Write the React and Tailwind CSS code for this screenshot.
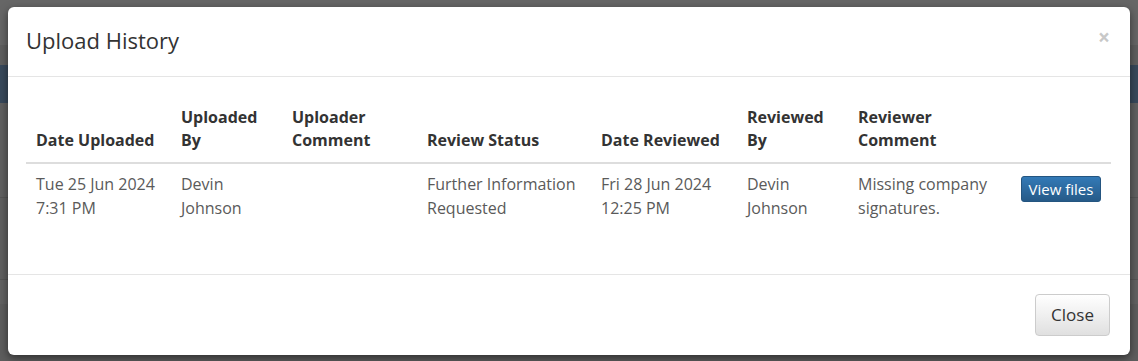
import React from "react";

const cols = [
  { w: "w-[145px]", h: ["Date Uploaded"], b: ["Tue 25 Jun 2024", "7:31 PM"] },
  { w: "w-[111px]", h: ["Uploaded", "By"], b: ["Devin", "Johnson"] },
  { w: "w-[135px]", h: ["Uploader", "Comment"], b: [] },
  { w: "w-[174px]", h: ["Review Status"], b: ["Further Information", "Requested"] },
  { w: "w-[146px]", h: ["Date Reviewed"], b: ["Fri 28 Jun 2024", "12:25 PM"] },
  { w: "w-[111px]", h: ["Reviewed", "By"], b: ["Devin", "Johnson"] },
  { w: "w-[163px]", h: ["Reviewer", "Comment"], b: ["Missing company", "signatures."] },
];

export default function App() {
  return (
    <div
      className="relative h-[361px] w-[1138px] overflow-hidden bg-[#5f5f5f]"
      style={{ fontFamily: '"Open Sans", sans-serif' }}
    >
      {/* background page (dimmed) */}
      <div className="flex h-full flex-col">
        <div className="h-[45px] bg-[#666666]" />
        <div className="h-[20px] bg-[#5e5e5e]" />
        <div className="h-[38px] bg-[#38495b]" />
        <div className="h-[95px] border-b border-[#555] bg-[#606060]" />
        <div className="h-[82px] border-b border-[#555] bg-[#5f5f5f]" />
        <div className="h-[24px] bg-[#626262]" />
        <div className="flex-1 bg-[#5d5d5d]" />
      </div>

      {/* modal */}
      <div className="absolute left-[8px] top-[7px] flex h-[348px] w-[1122px] flex-col rounded-[6px] bg-white shadow-[0_3px_9px_rgba(0,0,0,0.5)]">
        <div className="flex h-[70px] items-center justify-between border-b border-[#e5e5e5] pb-[4px] pl-[18px] pr-[20px]">
          <h4 className="text-[22px] leading-[28px] text-[#333]">Upload History</h4>
          <span className="-mt-[4px] text-[21px] font-bold leading-none text-[#c8c8c8]">×</span>
        </div>
        <div className="flex-1 px-[18px] pt-[19px]">
          <table className="w-[1085px] border-collapse">
            <thead>
              <tr className="border-b-2 border-[#ddd]">
                {cols.map((c, i) => (
                  <th
                    key={i}
                    className={`${c.w} px-[10px] pb-[10px] pt-[10px] text-left align-bottom text-[16px] font-bold leading-[23px] text-[#333]`}
                  >
                    {c.h.map((t, j) => (
                      <div key={j}>{t}</div>
                    ))}
                  </th>
                ))}
                <th className="w-[100px]" />
              </tr>
            </thead>
            <tbody>
              <tr>
                {cols.map((c, i) => (
                  <td
                    key={i}
                    className="px-[10px] pb-[10px] pt-[8px] align-top text-[16px] leading-[24px] text-[#5a5a5a]"
                  >
                    {c.b.map((t, j) => (
                      <div key={j}>{t}</div>
                    ))}
                  </td>
                ))}
                <td className="px-[10px] pt-[12px] align-top">
                  <button className="h-[26px] w-[80px] rounded-[3px] border border-[#245580] bg-gradient-to-b from-[#337ab7] to-[#265a88] text-[15px] leading-[20px] text-white">
                    View files
                  </button>
                </td>
              </tr>
            </tbody>
          </table>
        </div>
        <div className="flex h-[81px] items-center justify-end border-t border-[#e5e5e5] pr-[20px]">
          <button className="h-[42px] w-[75px] rounded-[4px] border border-[#ccc] bg-gradient-to-b from-white to-[#e0e0e0] text-[17px] text-[#333]">
            Close
          </button>
        </div>
      </div>
    </div>
  );
}
